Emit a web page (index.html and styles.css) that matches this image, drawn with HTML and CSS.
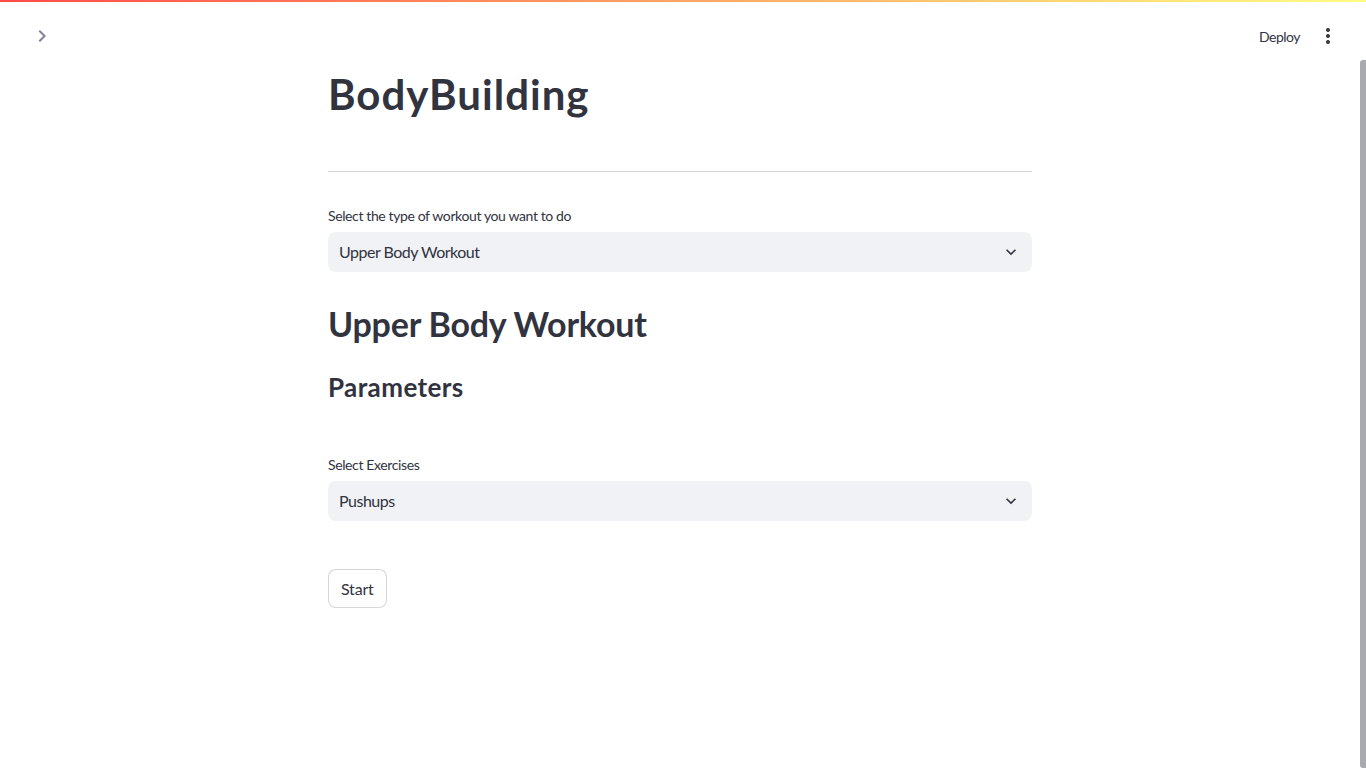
FILE: index.html
```html
<!DOCTYPE html>
<html lang="en">
<head>
<meta charset="utf-8">
<title>BodyBuilding</title>
<link rel="stylesheet" href="styles.css">
</head>
<body>
<div class="decoration"></div>
<header class="header">
  <button class="icon-btn sidebar-toggle" aria-label="Open sidebar">
    <svg width="24" height="24" viewBox="0 0 24 24"><path d="M10 6L8.59 7.41 13.17 12l-4.58 4.59L10 18l6-6z" fill="#808495"/></svg>
  </button>
  <div class="toolbar">
    <span class="deploy">Deploy</span>
    <button class="icon-btn menu" aria-label="Main menu">
      <svg width="24" height="24" viewBox="0 0 24 24"><path d="M12 8c1.1 0 2-.9 2-2s-.9-2-2-2-2 .9-2 2 .9 2 2 2zm0 2c-1.1 0-2 .9-2 2s.9 2 2 2 2-.9 2-2-.9-2-2-2zm0 6c-1.1 0-2 .9-2 2s.9 2 2 2 2-.9 2-2-.9-2-2-2z" fill="#31333f"/></svg>
    </button>
  </div>
</header>
<div class="page">
  <main class="main">
    <h1 class="title">BodyBuilding</h1>
    <hr class="divider">
    <label class="label">Select the type of workout you want to do</label>
    <div class="select">
      <span class="select-value">Upper Body Workout</span>
      <svg class="select-arrow" width="20" height="20" viewBox="0 0 24 24"><path d="M16.59 8.59L12 13.17 7.41 8.59 6 10l6 6 6-6z" fill="#31333f"/></svg>
    </div>
    <h2 class="subtitle">Upper Body Workout</h2>
    <h3 class="section">Parameters</h3>
    <label class="label label-ex">Select Exercises</label>
    <div class="select">
      <span class="select-value">Pushups</span>
      <svg class="select-arrow" width="20" height="20" viewBox="0 0 24 24"><path d="M16.59 8.59L12 13.17 7.41 8.59 6 10l6 6 6-6z" fill="#31333f"/></svg>
    </div>
    <div class="actions">
      <button class="start-btn">Start</button>
    </div>
  </main>
</div>
<div class="scrollbar"></div>
</body>
</html>
```

FILE: styles.css
```css
html, body {
  margin: 0;
  padding: 0;
  background: #ffffff;
  color: #31333f;
  font-family: Lato, "Noto Sans", sans-serif;
  overflow: hidden;
  height: 768px;
}

.decoration {
  height: 2px;
  background: linear-gradient(90deg, rgb(255, 75, 75), rgb(255, 253, 128));
}

.header {
  height: 68px;
  display: flex;
  align-items: center;
  justify-content: space-between;
  padding: 0 26px 0 30px;
}

.icon-btn {
  background: none;
  border: none;
  padding: 0;
  margin: 0;
  width: 24px;
  height: 24px;
  display: flex;
  align-items: center;
  justify-content: center;
  cursor: pointer;
}

.toolbar {
  display: flex;
  align-items: center;
  gap: 16px;
}

.deploy {
  font-size: 14px;
  line-height: 20px;
  letter-spacing: -0.5px;
  color: #31333f;
  margin-top: 1px;
}

.page {
  padding-right: 6px;
}

.main {
  width: 704px;
  margin: 0 auto;
  display: flex;
  flex-direction: column;
  align-items: stretch;
}

.title {
  margin: 0;
  font-size: 42px;
  line-height: 48px;
  font-weight: 700;
  letter-spacing: 1px;
  color: #31333f;
}

.divider {
  margin: 53px 0 34px;
  border: none;
  height: 1px;
  background: #d6d6d9;
}

.label {
  display: block;
  font-size: 14px;
  line-height: 20px;
  height: 20px;
  letter-spacing: -0.38px;
  margin-bottom: 6px;
  color: #31333f;
}

.select {
  height: 40px;
  box-sizing: border-box;
  background: #f0f2f6;
  border-radius: 8px;
  display: flex;
  align-items: center;
  justify-content: space-between;
  padding: 0 11px 0 11px;
}

.select-value {
  font-size: 16px;
  letter-spacing: -0.5px;
  color: #31333f;
  margin-top: -1px;
}

.subtitle {
  margin: 32px 0 0;
  font-size: 34px;
  line-height: 40px;
  font-weight: 700;
  letter-spacing: -0.2px;
}

.section {
  margin: 28px 0 0;
  font-size: 26px;
  line-height: 30px;
  font-weight: 700;
  letter-spacing: 0.4px;
}

.label-ex {
  margin-top: 53px;
}

.actions {
  margin-top: 48px;
  display: flex;
}

.start-btn {
  font-family: inherit;
  font-size: 16px;
  letter-spacing: -0.2px;
  color: #31333f;
  background: #ffffff;
  border: 1px solid rgba(49, 51, 63, 0.2);
  border-radius: 8px;
  height: 39px;
  padding: 0 12px;
  cursor: pointer;
}

.scrollbar {
  position: absolute;
  top: 60px;
  right: 0;
  width: 6px;
  height: 708px;
  background: #a9a9b0;
  border-radius: 3px 0 0 3px;
}
```
